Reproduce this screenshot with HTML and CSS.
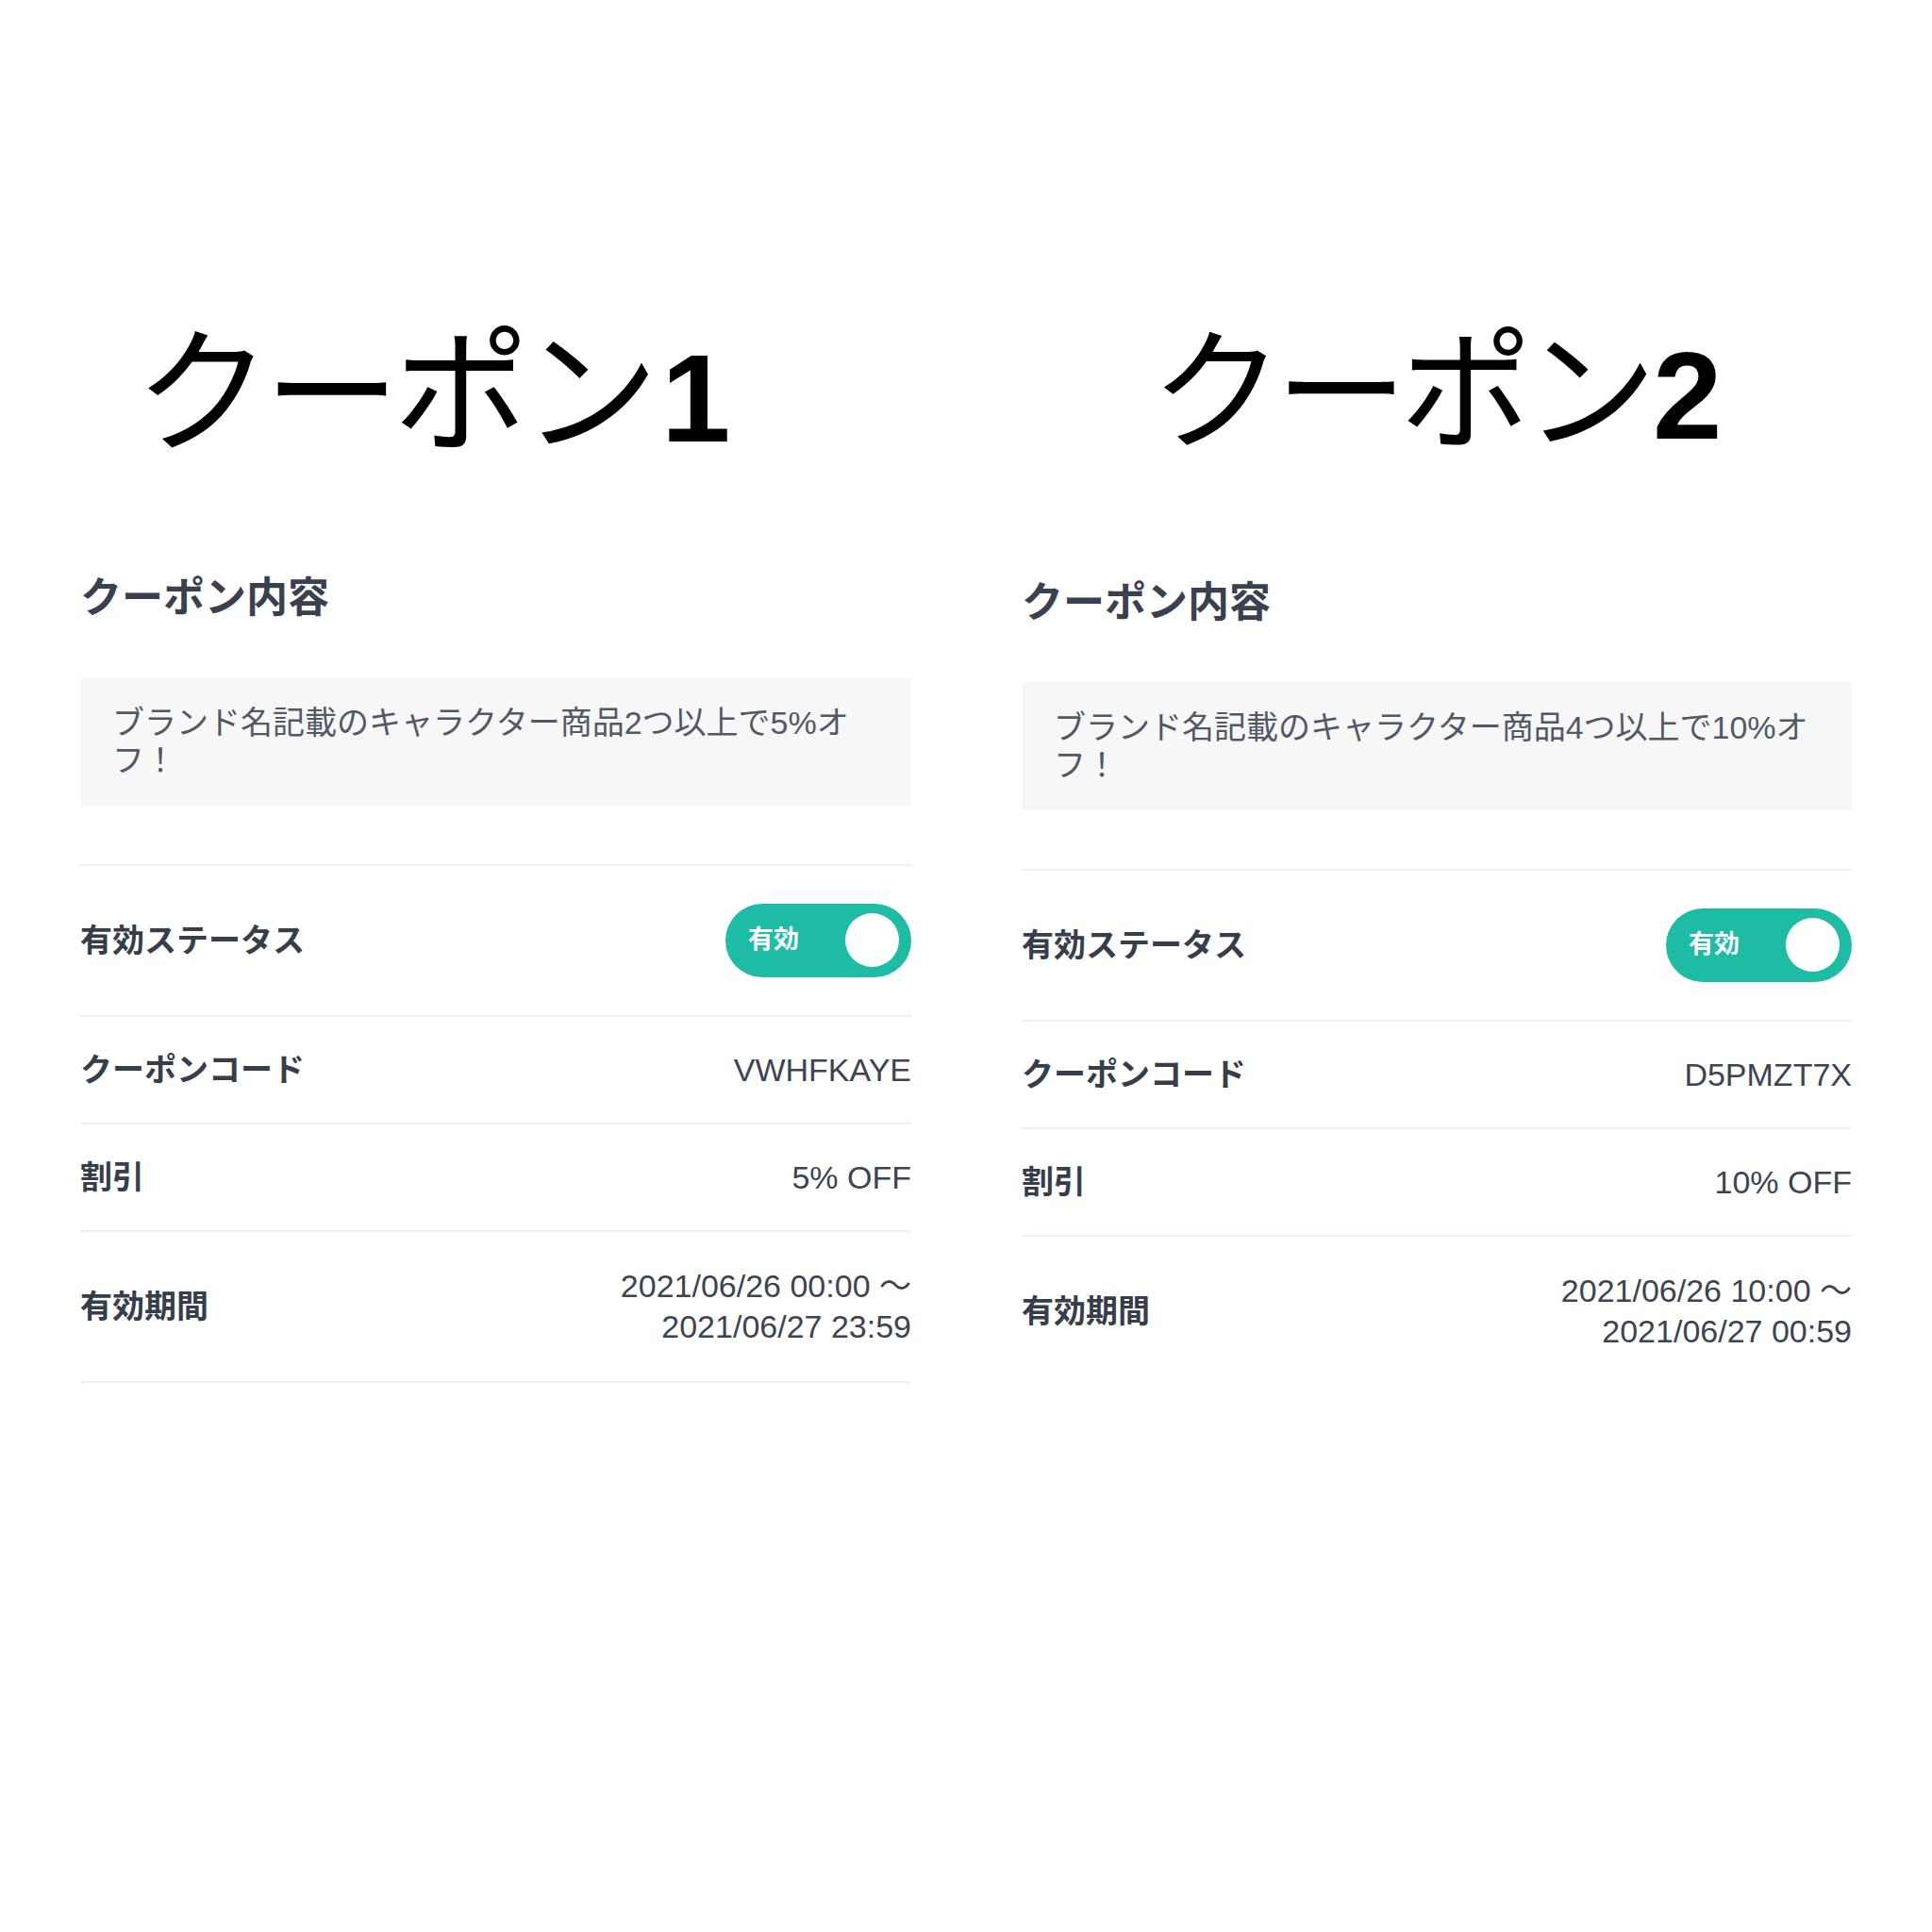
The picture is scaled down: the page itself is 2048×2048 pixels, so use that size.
FILE: index.html
```html
<!DOCTYPE html>
<html lang="ja">
<head>
  <meta charset="UTF-8" />
  <meta name="viewport" content="width=device-width, initial-scale=1.0"/>
  <title>クーポン比較</title>
  <link rel="stylesheet" href="styles.css">
</head>
<body>
  <div class="compare">

    <!-- クーポン1 -->
    <section class="coupon coupon-first">
      <h1 class="coupon-title"><span class="kana">クーポン</span><b>1</b></h1>
      <div class="coupon-panel ruled">
        <h2>クーポン内容</h2>
        <div class="coupon-desc">ブランド名記載のキャラクター商品2つ以上で5%オ<br>フ！</div>
        <div class="row row-tall">
          <span class="label">有効ステータス</span>
          <span class="toggle"><span class="toggle-text">有効</span><span class="knob"></span></span>
        </div>
        <div class="row">
          <span class="label">クーポンコード</span>
          <span class="value">VWHFKAYE</span>
        </div>
        <div class="row">
          <span class="label">割引</span>
          <span class="value">5% OFF</span>
        </div>
        <div class="row row-period">
          <span class="label">有効期間</span>
          <span class="value period">2021/06/26 00:00 ～<br>2021/06/27 23:59</span>
        </div>
      </div>
    </section>

    <!-- クーポン2 -->
    <section class="coupon coupon-second">
      <h1 class="coupon-title"><span class="kana">クーポン</span><b>2</b></h1>
      <div class="coupon-panel">
        <h2>クーポン内容</h2>
        <div class="coupon-desc">ブランド名記載のキャラクター商品4つ以上で10%オ<br>フ！</div>
        <div class="row row-tall">
          <span class="label">有効ステータス</span>
          <span class="toggle"><span class="toggle-text">有効</span><span class="knob"></span></span>
        </div>
        <div class="row">
          <span class="label">クーポンコード</span>
          <span class="value">D5PMZT7X</span>
        </div>
        <div class="row">
          <span class="label">割引</span>
          <span class="value">10% OFF</span>
        </div>
        <div class="row row-period">
          <span class="label">有効期間</span>
          <span class="value period">2021/06/26 10:00 ～<br>2021/06/27 00:59</span>
        </div>
      </div>
    </section>

  </div>
</body>
</html>
```

FILE: styles.css
```css
body {
  margin: 0;
  background: #fff;
  font-family: "Liberation Sans", "Noto Sans CJK JP", sans-serif;
  color: #3a4250;
}

.compare {
  display: grid;
  grid-template-columns: 881px 880px;
  column-gap: 117px;
  padding: 347px 0 0 85px;
}

.coupon-title {
  margin: 0;
  height: 144px;
  font-size: 144px;
  font-weight: 400;
  line-height: 1;
  color: #000;
  white-space: nowrap;
}

.coupon-title b {
  font-size: 132px;
  font-weight: 700;
}

.coupon-first .coupon-title {
  padding-left: 58px;
}

.coupon-first .kana {
  letter-spacing: -7px;
}

.coupon-first .coupon-title b {
  margin-left: 10px;
}

.coupon-second .coupon-title {
  padding-left: 137px;
  font-size: 140px;
}

.coupon-second .kana {
  letter-spacing: -8px;
}

.coupon-second .coupon-title b {
  margin-left: 4px;
}

.coupon-panel {
  margin-top: 117px;
}

.coupon-second .coupon-panel {
  margin-top: 122px;
}

.coupon-panel.ruled {
  border-bottom: 2px solid #eff0f2;
}

h2 {
  margin: 0;
  font-size: 44px;
  line-height: 1.2;
  font-weight: 700;
  color: #394150;
}

.coupon-desc {
  margin-top: 57px;
  margin-bottom: 62px;
  padding: 28px 34px;
  background: #f7f7f8;
  font-size: 34px;
  line-height: 40px;
  color: #515866;
}

.row {
  display: flex;
  justify-content: space-between;
  align-items: center;
  padding: 39px 0;
  border-top: 2px solid #eff0f2;
  font-size: 34px;
  line-height: 1;
}

.row-tall {
  padding: 40px 0;
}

.row-period {
  padding: 36px 0;
}

.label {
  font-weight: 700;
  color: #363e4b;
}

.value {
  color: #3d4451;
  text-align: right;
}

.period {
  line-height: 43px;
}

.toggle {
  display: flex;
  align-items: center;
  justify-content: space-between;
  box-sizing: border-box;
  width: 197px;
  height: 78px;
  padding: 0 13px 0 24px;
  border-radius: 39px;
  background: #1ebba5;
}

.toggle-text {
  font-size: 27px;
  font-weight: 700;
  color: #fff;
}

.knob {
  width: 57px;
  height: 57px;
  border-radius: 50%;
  background: #fff;
}
```
